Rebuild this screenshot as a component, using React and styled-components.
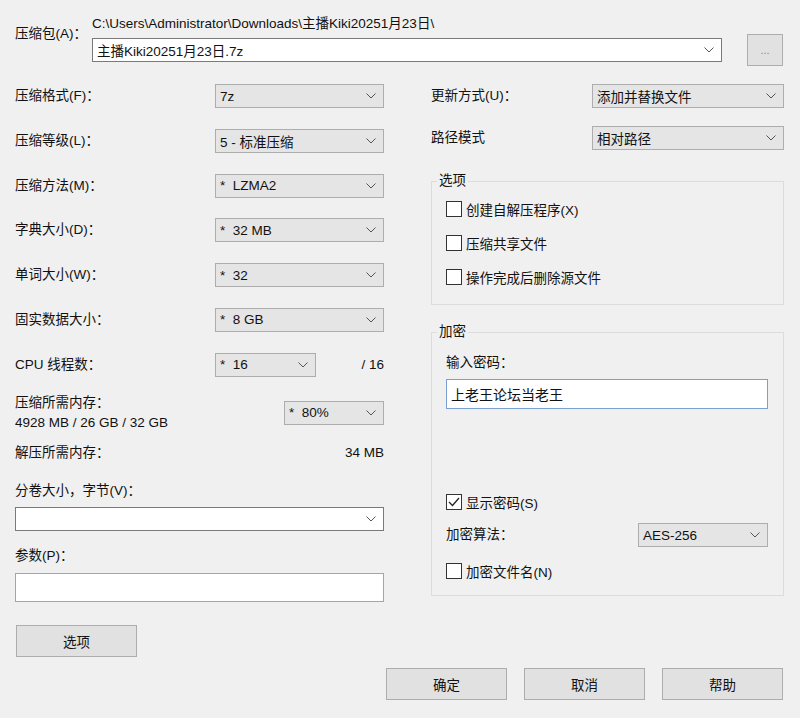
import React from 'react';
import styled, { createGlobalStyle } from 'styled-components';

const GlobalStyle = createGlobalStyle`
  html, body {
    margin: 0;
    padding: 0;
    background: #f0f0f0;
  }

  body {
    font-family: "Liberation Sans", "Noto Sans CJK SC", sans-serif;
    font-size: 13.5px;
    color: #111;
  }
`;

const Dialog = styled.div`
  width: 800px;
  height: 718px;
  box-sizing: border-box;
  padding: 16px 16px 0 15px;
  background: #f0f0f0;
`;

const ArchiveRow = styled.div`
  display: flex;
  align-items: flex-start;
`;

const ArchiveLabel = styled.div`
  width: 77px;
  flex: none;
  line-height: 16px;
  margin-top: 10px;
`;

const ArchiveBody = styled.div`
  flex: 1;
  display: flex;
  flex-direction: column;
`;

const PathText = styled.div`
  line-height: 16px;
  white-space: nowrap;
`;

const ComboRow = styled.div`
  display: flex;
  align-items: center;
  height: 32px;
  margin-top: 2px;
  margin-right: 1px;
`;

const Columns = styled.div`
  display: grid;
  grid-template-columns: 369px 353px;
  column-gap: 47px;
  margin-top: 18px;
  align-items: start;
`;

const Column = styled.div`
  display: flex;
  flex-direction: column;
`;

const Row = styled.div`
  display: flex;
  align-items: center;
  justify-content: space-between;
  height: ${(p) => p.$h || 24}px;
  margin-top: ${(p) => p.$mt || 0}px;
`;

const ThreadRow = styled.div`
  display: grid;
  grid-template-columns: 200px 101px 1fr;
  align-items: center;
  height: 24px;
  margin-top: ${(p) => p.$mt || 0}px;
`;

const Label = styled.span`
  line-height: 16px;
  white-space: nowrap;
  text-align: ${(p) => p.$align || 'left'};
`;

const TextLine = styled.div`
  line-height: ${(p) => p.$lh || 16}px;
  height: ${(p) => p.$lh || 16}px;
  margin-top: ${(p) => p.$mt || 0}px;
  white-space: nowrap;
`;

const Select = styled.div`
  box-sizing: border-box;
  width: ${(p) => (p.$w ? `${p.$w}px` : 'auto')};
  height: 24px;
  display: flex;
  align-items: center;
  justify-content: space-between;
  padding: 0 7px 0 4px;
  background: ${(p) => (p.$white ? '#fff' : '#e5e5e5')};
  border: 1px solid ${(p) => (p.$white ? '#7a7a7a' : '#adadad')};
  white-space: pre;
  flex: ${(p) => (p.$grow ? 1 : 'none')};
`;

const TextInput = styled.div`
  box-sizing: border-box;
  width: ${(p) => p.$w}px;
  height: ${(p) => p.$h || 30}px;
  margin-top: ${(p) => p.$mt || 0}px;
  display: flex;
  align-items: center;
  padding: 0 4px;
  background: #fff;
  border: 1px solid ${(p) => (p.$focus ? '#7a9fd3' : '#a5a5a5')};
  font-size: 14px;
`;

const Button = styled.button`
  box-sizing: border-box;
  width: ${(p) => p.$w || 121}px;
  height: ${(p) => p.$h || 32}px;
  margin: ${(p) => p.$mt || 0}px 0 0 ${(p) => p.$ml || 0}px;
  padding: 0;
  background: #e1e1e1;
  border: 1px solid #adadad;
  font: inherit;
  color: #111;
  flex: none;
`;

const BrowseButton = styled(Button)`
  margin-left: 25px;
  color: #888;
  font-size: 11px;
`;

const MemoryRow = styled.div`
  display: flex;
  align-items: center;
  justify-content: space-between;
  margin-top: 16px;
`;

const Group = styled.fieldset`
  margin: ${(p) => p.$mt || 0}px 0 0 0;
  padding: 0 15px ${(p) => p.$pb || 0}px 14px;
  border: 1px solid #dcdcdc;
  min-width: 0;
`;

const Legend = styled.legend`
  padding: 0 2px;
  margin-left: -9px;
  line-height: 16px;
`;

const CheckRow = styled.label`
  display: flex;
  align-items: center;
  height: 20px;
  margin-top: ${(p) => p.$mt || 0}px;
  gap: 4px;
`;

const Box = styled.span`
  box-sizing: border-box;
  width: 16px;
  height: 16px;
  flex: none;
  background: #fff;
  border: 1px solid #333;
  display: flex;
  align-items: center;
  justify-content: center;
`;

const Footer = styled.div`
  display: flex;
  justify-content: flex-end;
  gap: 17px;
  margin-top: 11px;
  padding-right: 1px;
`;

const Chevron = () => (
  <svg width="10" height="6" viewBox="0 0 10 6">
    <path d="M0.5 0.5 L5 5 L9.5 0.5" fill="none" stroke="#555" strokeWidth="1" />
  </svg>
);

const Dropdown = ({ w, white, grow, children }) => (
  <Select $w={w} $white={white} $grow={grow}>
    <span>{children}</span>
    <Chevron />
  </Select>
);

const Check = ({ checked, children, mt }) => (
  <CheckRow $mt={mt}>
    <Box>
      {checked && (
        <svg width="12" height="10" viewBox="0 0 12 10">
          <path d="M1 5 L4.5 8.5 L11 1" fill="none" stroke="#222" strokeWidth="1.3" />
        </svg>
      )}
    </Box>
    <span>{children}</span>
  </CheckRow>
);

const leftRows = [
  ['压缩格式(F)：', '7z'],
  ['压缩等级(L)：', '5 - 标准压缩'],
  ['压缩方法(M)：', '*  LZMA2'],
  ['字典大小(D)：', '*  32 MB'],
  ['单词大小(W)：', '*  32'],
  ['固实数据大小：', '*  8 GB'],
];

export default function App() {
  return (
    <>
      <GlobalStyle />
      <Dialog>
        <ArchiveRow>
          <ArchiveLabel>压缩包(A)：</ArchiveLabel>
          <ArchiveBody>
            <PathText>C:\Users\Administrator\Downloads\主播Kiki20251月23日\</PathText>
            <ComboRow>
              <Dropdown white grow>
                主播Kiki20251月23日.7z
              </Dropdown>
              <BrowseButton $w={36} $h={32}>
                ...
              </BrowseButton>
            </ComboRow>
          </ArchiveBody>
        </ArchiveRow>

        <Columns>
          <Column>
            {leftRows.map(([label, value], i) => (
              <Row key={label} $mt={i === 0 ? 0 : 20.8}>
                <Label>{label}</Label>
                <Dropdown w={169}>{value}</Dropdown>
              </Row>
            ))}
            <ThreadRow $mt={20.8}>
              <Label>CPU 线程数：</Label>
              <Dropdown w={101}>*  16</Dropdown>
              <Label $align="right">/ 16</Label>
            </ThreadRow>
            <MemoryRow>
              <div>
                <TextLine $lh={20}>压缩所需内存：</TextLine>
                <TextLine $lh={20}>4928 MB / 26 GB / 32 GB</TextLine>
              </div>
              <Dropdown w={100}>*  80%</Dropdown>
            </MemoryRow>
            <Row $h={20} $mt={10}>
              <Label>解压所需内存：</Label>
              <Label>34 MB</Label>
            </Row>
            <TextLine $lh={20} $mt={18}>
              分卷大小，字节(V)：
            </TextLine>
            <Row $mt={6}>
              <Dropdown w={369} white>
                {' '}
              </Dropdown>
            </Row>
            <TextLine $lh={20} $mt={15}>
              参数(P)：
            </TextLine>
            <TextInput $w={369} $h={29} $mt={7} />
            <Button $mt={23} $ml={1}>
              选项
            </Button>
          </Column>

          <Column>
            <Row>
              <Label>更新方式(U)：</Label>
              <Dropdown w={192}>添加并替换文件</Dropdown>
            </Row>
            <Row $mt={18}>
              <Label>路径模式</Label>
              <Dropdown w={192}>相对路径</Dropdown>
            </Row>
            <Group $mt={23} $pb={17}>
              <Legend>选项</Legend>
              <Check mt={10}>创建自解压程序(X)</Check>
              <Check mt={14}>压缩共享文件</Check>
              <Check mt={14}>操作完成后删除源文件</Check>
            </Group>
            <Group $mt={19} $pb={14}>
              <Legend>加密</Legend>
              <TextLine $mt={15}>输入密码：</TextLine>
              <TextInput $w={322} $mt={8} $focus>
                上老王论坛当老王
              </TextInput>
              <Check checked mt={83}>
                显示密码(S)
              </Check>
              <Row $mt={11}>
                <Label>加密算法：</Label>
                <Dropdown w={130}>AES-256</Dropdown>
              </Row>
              <Check mt={14}>加密文件名(N)</Check>
            </Group>
          </Column>
        </Columns>

        <Footer>
          <Button $w={121}>确定</Button>
          <Button $w={121}>取消</Button>
          <Button $w={121}>帮助</Button>
        </Footer>
      </Dialog>
    </>
  );
}
